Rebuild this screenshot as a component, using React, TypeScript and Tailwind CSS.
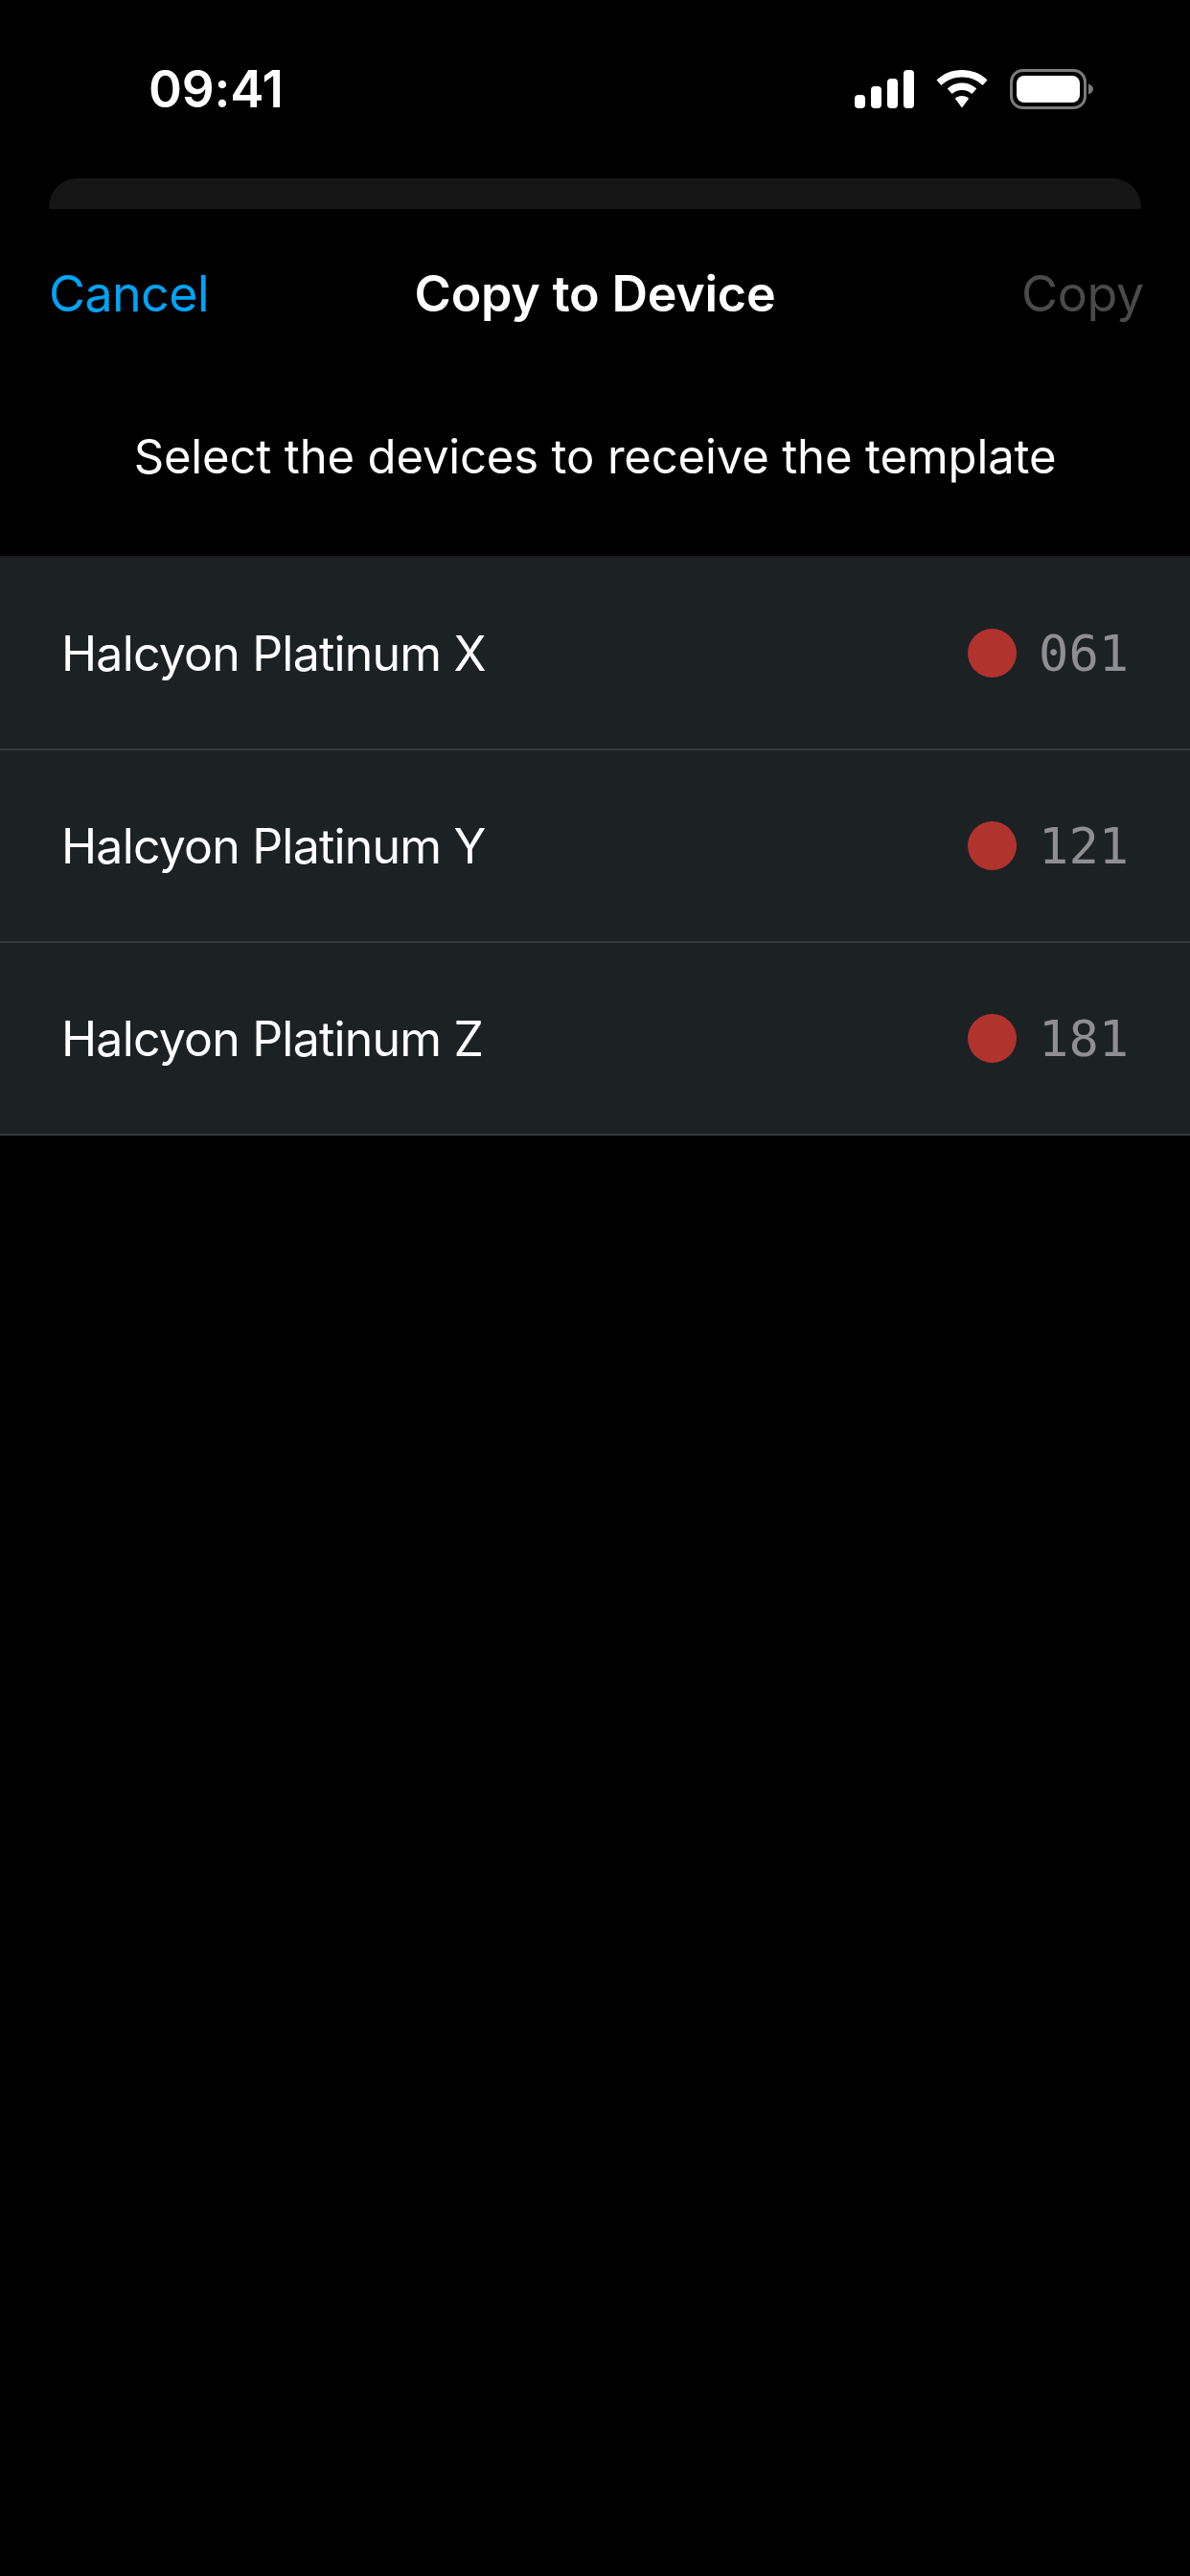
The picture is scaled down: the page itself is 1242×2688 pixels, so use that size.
const sans = "font-['Inter','Liberation_Sans',sans-serif]";

function Signal() {
  return (
    <svg width="62" height="40" viewBox="0 0 62 40" fill="#fff">
      <rect x="0" y="26" width="11" height="14" rx="4" />
      <rect x="17" y="17" width="11" height="23" rx="4" />
      <rect x="34" y="9" width="11" height="31" rx="4" />
      <rect x="51" y="0" width="11" height="40" rx="4" />
    </svg>
  );
}

function Wifi() {
  return (
    <svg width="54" height="40" viewBox="0 0 54 40" fill="#fff">
      <path d="M27 0C37.5 0 46.8 4 53.5 10.6L48.6 16C43 10.6 35.5 7.4 27 7.4S11 10.6 5.4 16L.5 10.6C7.2 4 16.5 0 27 0Z" />
      <path d="M27 13.5C32.8 13.5 38.2 15.8 42.2 19.6L37.3 25C34.6 22.4 31 20.9 27 20.9S19.4 22.4 16.7 25L11.8 19.6C15.8 15.8 21.2 13.5 27 13.5Z" />
      <path d="M27 27C29.8 27 32.3 28 34.2 29.8L27 39.5L19.8 29.8C21.7 28 24.2 27 27 27Z" />
    </svg>
  );
}

function Battery() {
  return (
    <svg width="87" height="42" viewBox="0 0 87 42">
      <rect x="1.5" y="1.5" width="77" height="39" rx="12" fill="none" stroke="#7a7a7a" strokeWidth="3" />
      <rect x="7" y="7" width="66" height="28" rx="8" fill="#fff" />
      <path d="M82 15.5C85 16.5 87 18.5 87 21S85 25.5 82 26.5Z" fill="#7a7a7a" />
    </svg>
  );
}

function Row({ name, code }: { name: string; code: string }) {
  return (
    <div className="flex h-[201px] items-center justify-between border-b-2 border-[#34393c] bg-[#1c2124] pl-[64px] pr-[64px]">
      <span className={`${sans} text-[50px] leading-none tracking-[-0.8px] text-white`}>{name}</span>
      <div className="flex items-center gap-[23px]">
        <span className="h-[51px] w-[51px] rounded-full bg-[#b0342d]" />
        <span className="font-['DejaVu_Sans_Mono',monospace] text-[52px] leading-none text-[#8e8e93]">{code}</span>
      </div>
    </div>
  );
}

export default function App() {
  return (
    <div className="flex h-[2688px] w-[1242px] flex-col overflow-hidden bg-black">
      <div className="flex h-[186px] shrink-0 items-start justify-between pl-[155px] pr-[101px] pt-[62px]">
        <span className={`${sans} text-[53px] font-semibold leading-[63px] tracking-[-0.2px] text-white`}>09:41</span>
        <div className="flex items-center gap-[23px] pt-[10px]">
          <Signal />
          <Wifi />
          <Battery />
        </div>
      </div>
      <div className="mx-[51px] h-[32px] shrink-0 rounded-t-[30px] bg-[#161616]" />
      <div className="relative flex h-[178px] shrink-0 items-center justify-between pl-[51px] pr-[48px]">
        <span className={`${sans} text-[52px] leading-none tracking-[-0.6px] text-[#00a3f5]`}>Cancel</span>
        <span className={`${sans} absolute inset-x-0 text-center text-[52px] font-semibold leading-none tracking-[-0.25px] text-white`}>Copy to Device</span>
        <span className={`${sans} text-[52px] leading-none tracking-[-0.3px] text-[#4a4a4a]`}>Copy</span>
      </div>
      <div className="flex h-[184px] shrink-0 items-start justify-center pt-[56px]">
        <span className={`${sans} text-[49px] leading-none tracking-[-0.15px] text-white`}>Select the devices to receive the template</span>
      </div>
      <div className="border-t-2 border-[#16191b]">
        <Row name="Halcyon Platinum X" code="061" />
        <Row name="Halcyon Platinum Y" code="121" />
        <Row name="Halcyon Platinum Z" code="181" />
      </div>
    </div>
  );
}
